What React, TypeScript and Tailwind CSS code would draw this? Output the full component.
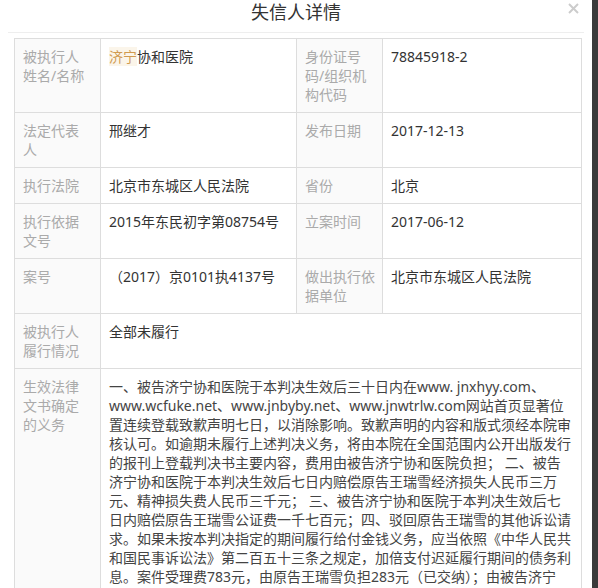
import React from 'react';

type Row = {
  label: string[];
  value: React.ReactNode;
  label2?: string[];
  value2?: React.ReactNode;
};

const duty = [
  '一、被告济宁协和医院于本判决生效后三十日内在www. jnxhyy.com、',
  'www.wcfuke.net、www.jnbyby.net、www.jnwtrlw.com网站首页显著位',
  '置连续登载致歉声明七日，以消除影响。致歉声明的内容和版式须经本院审',
  '核认可。如逾期未履行上述判决义务，将由本院在全国范围内公开出版发行',
  '的报刊上登载判决书主要内容，费用由被告济宁协和医院负担； 二、被告',
  '济宁协和医院于本判决生效后七日内赔偿原告王瑞雪经济损失人民币三万',
  '元、精神损失费人民币三千元； 三、被告济宁协和医院于本判决生效后七',
  '日内赔偿原告王瑞雪公证费一千七百元；四、驳回原告王瑞雪的其他诉讼请',
  '求。如果未按本判决指定的期间履行给付金钱义务，应当依照《中华人民共',
  '和国民事诉讼法》第二百五十三条之规定，加倍支付迟延履行期间的债务利',
  '息。案件受理费783元，由原告王瑞雪负担283元（已交纳）；由被告济宁',
  '协和医院负担500元，于本判决生效后七日内交纳。',
];

const rows: Row[] = [
  {
    label: ['被执行人', '姓名/名称'],
    value: (
      <>
        <span className="text-[#d09a50] bg-[#fbf5ea]">济宁</span>协和医院
      </>
    ),
    label2: ['身份证号', '码/组织机', '构代码'],
    value2: '78845918-2',
  },
  { label: ['法定代表', '人'], value: '邢继才', label2: ['发布日期'], value2: '2017-12-13' },
  { label: ['执行法院'], value: '北京市东城区人民法院', label2: ['省份'], value2: '北京' },
  { label: ['执行依据', '文号'], value: '2015年东民初字第08754号', label2: ['立案时间'], value2: '2017-06-12' },
  {
    label: ['案号'],
    value: '（2017）京0101执4137号',
    label2: ['做出执行依', '据单位'],
    value2: '北京市东城区人民法院',
  },
  { label: ['被执行人', '履行情况'], value: '全部未履行' },
];

function Label({ lines }: { lines: string[] }) {
  return (
    <td className="border border-[#dddddd] bg-[#fafafa] px-2 py-2 align-top text-[#aaaaaa] whitespace-nowrap">
      {lines.map((l) => (
        <span key={l} className="block">
          {l}
        </span>
      ))}
    </td>
  );
}

export default function App() {
  return (
    <div className="flex h-[588px] w-[598px] overflow-hidden bg-[#3a3a3a] font-['Noto_Sans','Noto_Sans_CJK_SC',sans-serif]">
      <div className="w-[592px] shrink-0 bg-white">
        {/* Header */}
        <div className="relative mx-2 h-[33px] border-b border-[#eeeeee]">
          <h1 className="text-center text-[18px] leading-[25px] text-[#333333]">失信人详情</h1>
          <button className="absolute right-[5px] top-[3px] text-[#cccccc]">
            <svg width="11" height="11" viewBox="0 0 11 11" fill="none" stroke="currentColor" strokeWidth="2">
              <line x1="1" y1="1" x2="10" y2="10" />
              <line x1="10" y1="1" x2="1" y2="10" />
            </svg>
          </button>
        </div>

        {/* Detail table */}
        <table className="ml-[14px] mt-[5px] w-[567px] table-fixed border-collapse text-[14px] leading-[19px] text-[#333333]">
          <colgroup>
            <col className="w-[86px]" />
            <col className="w-[196px]" />
            <col className="w-[86px]" />
            <col className="w-[199px]" />
          </colgroup>
          <tbody>
            {rows.map((r, i) => (
              <tr key={i}>
                <Label lines={r.label} />
                {r.label2 ? (
                  <>
                    <td className="border border-[#dddddd] px-2 py-2 align-top">{r.value}</td>
                    <Label lines={r.label2} />
                    <td className="border border-[#dddddd] px-2 py-2 align-top">{r.value2}</td>
                  </>
                ) : (
                  <td colSpan={3} className="border border-[#dddddd] px-2 py-2 align-top">
                    {r.value}
                  </td>
                )}
              </tr>
            ))}
            <tr>
              <Label lines={['生效法律', '文书确定', '的义务']} />
              <td colSpan={3} className="border border-[#dddddd] px-2 py-2 align-top text-[#444444]">
                {duty.map((l) => (
                  <span key={l} className="block whitespace-nowrap">
                    {l}
                  </span>
                ))}
              </td>
            </tr>
          </tbody>
        </table>
      </div>
      <div className="flex-1" />
    </div>
  );
}
